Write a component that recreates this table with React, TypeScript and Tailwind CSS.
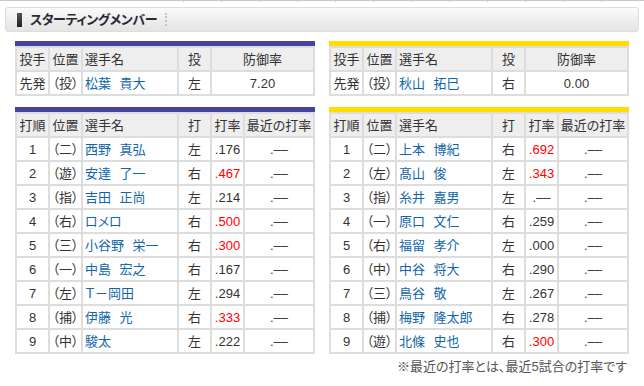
type Pitcher = { role: string; pos: string; name: string; hand: string; era: string };
type Batter = { no: number; pos: string; name: string; hand: string; avg: string; hot?: boolean };

const pitchers: Pitcher[] = [
  { role: "先発", pos: "（投）", name: "松葉 貴大", hand: "左", era: "7.20" },
  { role: "先発", pos: "（投）", name: "秋山 拓巳", hand: "右", era: "0.00" },
];

const orix: Batter[] = [
  { no: 1, pos: "（二）", name: "西野 真弘", hand: "左", avg: ".176" },
  { no: 2, pos: "（遊）", name: "安達 了一", hand: "右", avg: ".467", hot: true },
  { no: 3, pos: "（指）", name: "吉田 正尚", hand: "左", avg: ".214" },
  { no: 4, pos: "（右）", name: "ロメロ", hand: "右", avg: ".500", hot: true },
  { no: 5, pos: "（三）", name: "小谷野 栄一", hand: "右", avg: ".300", hot: true },
  { no: 6, pos: "（一）", name: "中島 宏之", hand: "右", avg: ".167" },
  { no: 7, pos: "（左）", name: "Ｔ－岡田", hand: "左", avg: ".294" },
  { no: 8, pos: "（捕）", name: "伊藤 光", hand: "右", avg: ".333", hot: true },
  { no: 9, pos: "（中）", name: "駿太", hand: "左", avg: ".222" },
];

const hanshin: Batter[] = [
  { no: 1, pos: "（二）", name: "上本 博紀", hand: "右", avg: ".692", hot: true },
  { no: 2, pos: "（左）", name: "髙山 俊", hand: "左", avg: ".343", hot: true },
  { no: 3, pos: "（指）", name: "糸井 嘉男", hand: "左", avg: ".––" },
  { no: 4, pos: "（一）", name: "原口 文仁", hand: "右", avg: ".259" },
  { no: 5, pos: "（右）", name: "福留 孝介", hand: "左", avg: ".000" },
  { no: 6, pos: "（中）", name: "中谷 将大", hand: "右", avg: ".290" },
  { no: 7, pos: "（三）", name: "鳥谷 敬", hand: "左", avg: ".267" },
  { no: 8, pos: "（捕）", name: "梅野 隆太郎", hand: "右", avg: ".278" },
  { no: 9, pos: "（遊）", name: "北條 史也", hand: "右", avg: ".300", hot: true },
];

const th = "border-2 border-[#dddddd] bg-[#eeeeee] font-normal h-[24px] p-0";
const td = "border-2 border-[#dddddd] h-[24px] p-0";
const nameCell = `${td} pl-[2px] text-[#1166aa] [word-spacing:5px]`;

const PitcherTable = ({ p, bar }: { p: Pitcher; bar: string }) => (
  <div className="w-[300px]">
    <div className={`h-[5px] ${bar}`} />
    <table className="w-full table-fixed border-collapse">
      <colgroup>
        <col className="w-[33px]" />
        <col className="w-[33px]" />
        <col className="w-[96px]" />
        <col className="w-[33px]" />
        <col />
      </colgroup>
      <thead>
        <tr>
          <th className={`${th} text-center`}>投手</th>
          <th className={`${th} text-center`}>位置</th>
          <th className={`${th} text-left pl-[2px]`}>選手名</th>
          <th className={`${th} text-center`}>投</th>
          <th className={`${th} text-center`}>防御率</th>
        </tr>
      </thead>
      <tbody>
        <tr>
          <td className={`${td} text-center`}>{p.role}</td>
          <td className={`${td} text-center`}>{p.pos}</td>
          <td className={nameCell}>{p.name}</td>
          <td className={`${td} text-center`}>{p.hand}</td>
          <td className={`${td} text-center`}>{p.era}</td>
        </tr>
      </tbody>
    </table>
  </div>
);

const BatterTable = ({ rows, bar }: { rows: Batter[]; bar: string }) => (
  <div className="w-[300px]">
    <div className={`h-[5px] ${bar}`} />
    <table className="w-full table-fixed border-collapse">
      <colgroup>
        <col className="w-[33px]" />
        <col className="w-[33px]" />
        <col className="w-[96px]" />
        <col className="w-[33px]" />
        <col className="w-[33px]" />
        <col />
      </colgroup>
      <thead>
        <tr>
          <th className={`${th} text-center`}>打順</th>
          <th className={`${th} text-center`}>位置</th>
          <th className={`${th} text-left pl-[2px]`}>選手名</th>
          <th className={`${th} text-center`}>打</th>
          <th className={`${th} text-center`}>打率</th>
          <th className={`${th} text-center`}>最近の打率</th>
        </tr>
      </thead>
      <tbody>
        {rows.map((r) => (
          <tr key={r.no}>
            <td className={`${td} text-center`}>{r.no}</td>
            <td className={`${td} text-center`}>{r.pos}</td>
            <td className={nameCell}>{r.name}</td>
            <td className={`${td} text-center`}>{r.hand}</td>
            <td className={`${td} text-center ${r.hot ? "text-[#ff0000]" : ""}`}>{r.avg}</td>
            <td className={`${td} text-center`}>.––</td>
          </tr>
        ))}
      </tbody>
    </table>
  </div>
);

export default function App() {
  return (
    <div className="w-[644px] h-[386px] overflow-hidden bg-white text-[13px] leading-none text-[#333333] font-['Liberation_Sans','Noto_Sans_CJK_JP',sans-serif] [font-feature-settings:'palt']">
      {/* leftover bottom edge of the table above */}
      <div className="flex h-[2px] border-t border-[#c8c8c8]">
        <div className="w-[183px]" />
        {Array.from({ length: 12 }).map((_, i) => (
          <div key={i} className="w-[38px] border-l border-[#c8c8c8]" />
        ))}
      </div>

      {/* section title */}
      <div className="mx-[5px] mt-[5px] h-[25px] flex items-center rounded-[3px] border border-[#dddddd] bg-gradient-to-b from-[#fbfbfb] via-[#eeeeee] to-[#e4e4e4] pl-[11px]">
        <div className="w-[5px] h-[14px] bg-gradient-to-b from-[#555555] to-[#222222]" />
        <span className="ml-[8px] text-[13px] font-bold text-[#2a2a35] tracking-[-0.4px]">スターティングメンバー</span>
        <div className="ml-[8px] h-[13px] border-l-2 border-dotted border-[#c4c4c4]" />
      </div>

      {/* pitchers */}
      <div className="mt-[9px] pl-[15px] flex gap-[14px]">
        <PitcherTable p={pitchers[0]} bar="bg-[#45459a]" />
        <PitcherTable p={pitchers[1]} bar="bg-[#ffdd00]" />
      </div>

      {/* batters */}
      <div className="mt-[11px] pl-[15px] flex gap-[14px]">
        <BatterTable rows={orix} bar="bg-[#45459a]" />
        <div className="w-[300px]">
          <BatterTable rows={hanshin} bar="bg-[#ffdd00]" />
          <p className="mt-[6px] text-right text-[13px] text-[#555555] pr-[2px]">※最近の打率とは、最近5試合の打率です</p>
        </div>
      </div>
    </div>
  );
}
